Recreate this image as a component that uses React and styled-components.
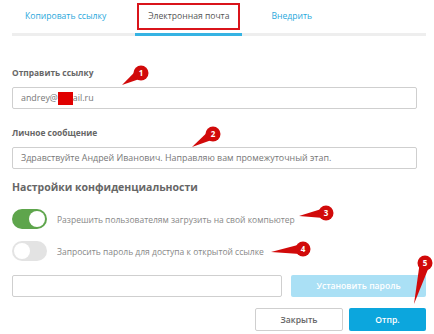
import React from 'react';
import styled, { createGlobalStyle } from 'styled-components';

const GlobalStyle = createGlobalStyle`
  html, body { margin:0; padding:0; background:#fff; }
  body { font-family:'Open Sans', 'Noto Sans', sans-serif; }
  * { box-sizing:border-box; }
`

const markers = [
  { n: 1, cx: 141, cy: 73, tx: 122, ty: 85 },
  { n: 2, cx: 213, cy: 134, tx: 192, ty: 147 },
  { n: 3, cx: 326, cy: 213, tx: 299, ty: 216 },
  { n: 4, cx: 303, cy: 249, tx: 271, ty: 252 },
  { n: 5, cx: 425, cy: 263, tx: 414, ty: 304 },
]

function Marker({ n, cx, cy, tx, ty }) {
  const r = 7.5
  const a = Math.atan2(ty - cy, tx - cx)
  const px = -Math.sin(a), py = Math.cos(a)
  const w = r * 0.7
  const pts = `${cx + px * w},${cy + py * w} ${tx},${ty} ${cx - px * w},${cy - py * w}`
  return (
    <g>
      <polygon points={pts} fill="#d10a0a" />
      <circle cx={cx} cy={cy} r={r} fill="#d10a0a" />
      <text x={cx} y={cy + 2.8} textAnchor="middle" fontSize="8" fontWeight="700" fill="#fff" fontFamily="'Open Sans', sans-serif">{n}</text>
    </g>
  )
}

function App() {
  return (
    <Page>
      <GlobalStyle />
      <Tabs>
        <Tab>Копировать ссылку</Tab>
        <Tab $active>Электронная почта<Highlight /></Tab>
        <Tab>Внедрить</Tab>
      </Tabs>

      <Label $top={31}>Отправить ссылку</Label>
      <Field>andrey@<Redact />ail.ru</Field>

      <Label $top={18}>Личное сообщение</Label>
      <Field>Здравствуйте Андрей Иванович. Направляю вам промежуточный этап.</Field>

      <Heading>Настройки конфиденциальности</Heading>
      <ToggleRow $top={14}>
        <Toggle $on />
        <ToggleText>Разрешить пользователям загрузить на свой компьютер</ToggleText>
      </ToggleRow>
      <ToggleRow $top={12}>
        <Toggle />
        <ToggleText>Запросить пароль для доступа к открытой ссылке</ToggleText>
      </ToggleRow>

      <PasswordRow>
        <Field $grow />
        <Button $variant="light">Установить пароль</Button>
      </PasswordRow>

      <Footer>
        <Button $variant="plain" $w={88}>Закрыть</Button>
        <Button $variant="primary" $w={77}>Отпр.</Button>
      </Footer>

      <Overlay width="434" height="334">
        {markers.map(m => <Marker key={m.n} {...m} />)}
      </Overlay>
    </Page>
  );
}

const Page = styled.div`
  position:relative;
  width:434px;
  height:334px;
  padding:0 8px 0 12px;
  overflow:hidden;
`
const Tabs = styled.div`
  display:flex;
  gap:16px;
  height:36px;
  border-bottom:3px solid #eeeeee;
`
const Tab = styled.div`
  position:relative;
  padding:0 13px;
  height:36px;
  line-height:33px;
  font-size:8.6px;
  color:${p => p.$active ? '#555' : '#2aa8dc'};
  border-bottom:${p => p.$active ? '3px solid #35b3e3' : '3px solid transparent'};
  margin-bottom:-3px;
  white-space:nowrap;
`
const Highlight = styled.span`
  position:absolute;
  left:2px;
  right:2px;
  top:3px;
  height:27px;
  border:2px solid #d9141b;
`
const Label = styled.div`
  margin-top:${p => p.$top}px;
  font-size:8.4px;
  font-weight:700;
  color:#666;
  line-height:12px;
`
const Field = styled.div`
  ${p => p.$grow ? 'flex:1;' : 'width:405px; margin-top:8px;'}
  height:22px;
  border:1px solid #cfcfcf;
  border-radius:2px;
  padding:0 8px;
  font-size:8.9px;
  line-height:20px;
  color:#777;
  white-space:nowrap;
  display:flex;
  align-items:center;
`
const Redact = styled.span`
  display:inline-block;
  width:15px;
  height:13px;
  background:#e00000;
`
const Heading = styled.div`
  margin-top:10px;
  font-size:10.5px;
  font-weight:700;
  color:#666;
  line-height:16px;
`
const ToggleRow = styled.div`
  display:flex;
  align-items:center;
  gap:10px;
  margin-top:${p => p.$top}px;
`
const Toggle = styled.span`
  position:relative;
  width:35px;
  height:20px;
  border-radius:10px;
  background:${p => p.$on ? '#5ea54c' : '#e3e3e3'};
  flex:none;
  &::after {
    content:'';
    position:absolute;
    top:2px;
    ${p => p.$on ? 'right:2px;' : 'left:2px;'}
    width:16px;
    height:16px;
    border-radius:50%;
    background:#fff;
  }
`
const ToggleText = styled.span`
  font-size:8.5px;
  color:#888;
`
const PasswordRow = styled.div`
  display:flex;
  gap:9px;
  margin-top:14px;
`
const Button = styled.button`
  height:${p => p.$variant === 'light' ? 22 : 23}px;
  width:${p => p.$w ? p.$w + 'px' : '135px'};
  font-family:inherit;
  font-size:8.6px;
  font-weight:600;
  border-radius:2px;
  padding:0;
  border:1px solid ${p => p.$variant === 'plain' ? '#cfcfcf' : 'transparent'};
  background:${p => p.$variant === 'light' ? '#aae0f5' : p.$variant === 'primary' ? '#0ca6dd' : '#fff'};
  color:${p => p.$variant === 'plain' ? '#666' : '#fff'};
`
const Footer = styled.div`
  display:flex;
  justify-content:flex-end;
  gap:6px;
  margin-top:11px;
`
const Overlay = styled.svg`
  position:absolute;
  left:0;
  top:0;
  pointer-events:none;
`

export default App;
